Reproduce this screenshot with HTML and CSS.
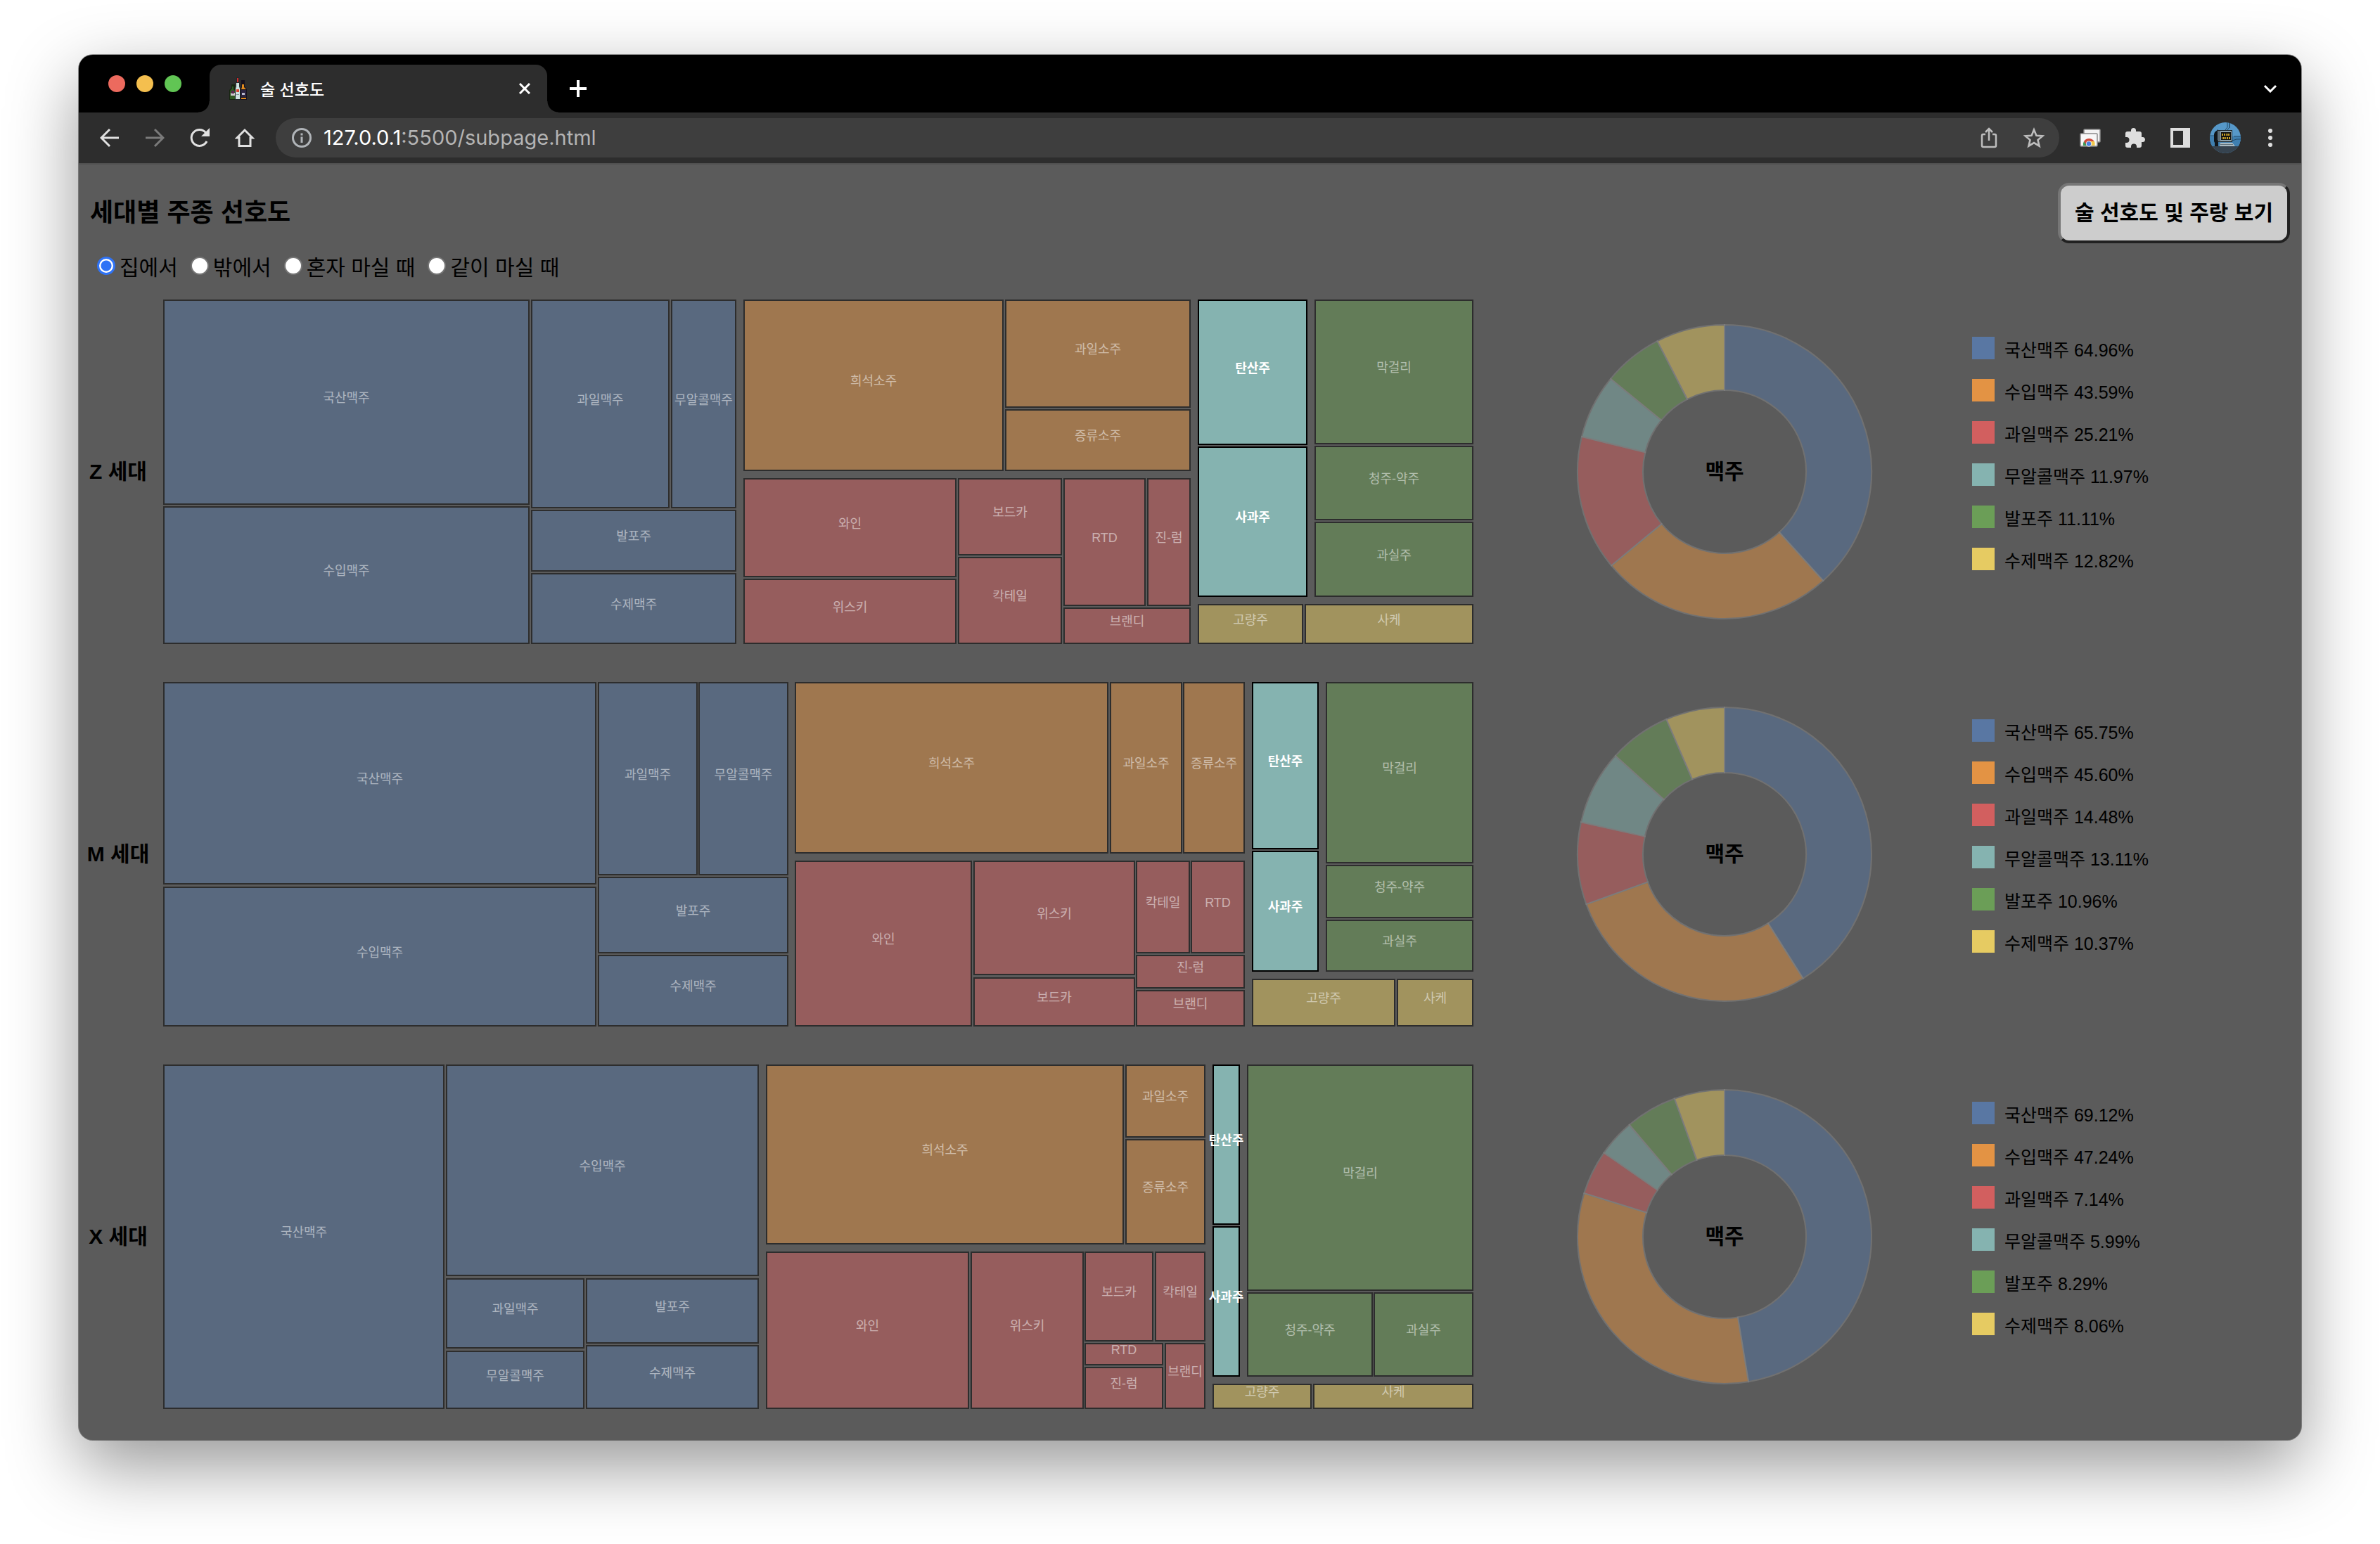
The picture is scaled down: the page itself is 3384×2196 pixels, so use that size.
FILE: index.html
```html
<!DOCTYPE html>
<html lang="ko">
<head>
<meta charset="utf-8">
<title>술 선호도</title>
<link rel="stylesheet" href="styles.css">
</head>
<body>
<div class="window">
  <header class="tabstrip">
    <div class="lights">
      <span class="light light-close"></span>
      <span class="light light-min"></span>
      <span class="light light-max"></span>
    </div>
    <div class="tab">
      <svg class="favicon" viewBox="0 0 26 32" aria-hidden="true">
        <path d="M3 10h5v5l1 3v14H0V18l3-3z" fill="#16240f"/>
        <path d="M4 13h2v4l2 2v12H1V19l3-3z" fill="#2f5a22"/>
        <path d="M2 22h6v4H2z" fill="#c9c9c9"/><path d="M3 19h4v4H3z" fill="#5b2750"/>
        <path d="M17 4h5v9l3 4v15h-9V17l1-4z" fill="#17131f"/>
        <path d="M18 10h3v4l3 3h-7l1-3zM17 29h7v2h-7z" fill="#e08a1e"/>
        <path d="M17 18h7v10h-7z" fill="#2b2440"/><path d="M18 22h4v3h-4z" fill="#b8b8cc"/>
        <path d="M10 0h4v12l2 4v16H8V16l2-4z" fill="#20282a"/>
        <path d="M11 1h2v6h-2z" fill="#cf2b2b"/>
        <path d="M10 8h4v5l1 3v15H9V16l1-3z" fill="#cfe3df"/>
        <path d="M10 17h4v4h-4z" fill="#d8422c"/><path d="M10 24h4v1h-4z" fill="#7d9693"/>
      </svg>
      <span class="tab-title">술 선호도</span>
      <button class="tab-close" aria-label="탭 닫기">
        <svg viewBox="0 0 16 16" width="16" height="16"><path d="M1 1l14 14M15 1L1 15" stroke="#fff" stroke-width="3" fill="none"/></svg>
      </button>
    </div>
    <button class="icon-button new-tab" aria-label="새 탭">
      <svg viewBox="0 0 24 24" width="24" height="24"><path d="M12 0v24M0 12h24" stroke="#fff" stroke-width="4" fill="none"/></svg>
    </button>
    <button class="icon-button tab-search" aria-label="탭 검색">
      <svg viewBox="0 0 20 12" width="20" height="12"><path d="M2 2l8 8 8-8" stroke="#fff" stroke-width="3" fill="none"/></svg>
    </button>
  </header>

  <nav class="toolbar">
    <button class="icon-button" aria-label="뒤로">
      <svg viewBox="0 0 28 28" width="28" height="28"><path d="M27 14H3M14 2L2 14l12 12" stroke="#e0e0e0" stroke-width="3" fill="none"/></svg>
    </button>
    <button class="icon-button" aria-label="앞으로">
      <svg viewBox="0 0 28 28" width="28" height="28"><path d="M1 14h24M14 2l12 12-12 12" stroke="#7a7a7a" stroke-width="3" fill="none"/></svg>
    </button>
    <button class="icon-button" aria-label="새로고침">
      <svg viewBox="0 0 28 28" width="28" height="28"><path d="M24 19a11.500 11.500 0 1 1-1.500-12.500" stroke="#e0e0e0" stroke-width="3" fill="none"/><path d="M28 0v12H16z" fill="#e0e0e0"/></svg>
    </button>
    <button class="icon-button" aria-label="홈">
      <svg viewBox="0 0 28 28" width="28" height="28"><path d="M14 3L3 14h3v11.500h16V14h3z" stroke="#e0e0e0" stroke-width="3" fill="none"/></svg>
    </button>
    <div class="omnibox">
      <svg viewBox="0 0 28 28" width="28" height="28" aria-hidden="true"><circle cx="14" cy="14" r="12.500" stroke="#b0b4b8" stroke-width="3" fill="none"/><path d="M12.500 12.500h3V21h-3zM12.500 7.500h3v3h-3z" fill="#b0b4b8"/></svg>
      <a class="url" href="http://127.0.0.1:5500/subpage.html"><span class="url-host">127.0.0.1</span>:5500/subpage.html</a>
      <button class="icon-button" aria-label="공유">
        <svg viewBox="0 0 24 30" width="24" height="30"><path d="M7 10H4q-2 0-2 2v14q0 2 2 2h16q2 0 2-2V12q0-2-2-2h-3M12 19V3M7 7l5-5 5 5" stroke="#bdbdbd" stroke-width="2.500" fill="none"/></svg>
      </button>
      <button class="icon-button" aria-label="북마크">
        <svg viewBox="0 0 30 30" width="30" height="30"><path d="M15 3.500l3.400 8.200 8.800.7-6.700 5.700 2.100 8.600L15 22.100l-7.600 4.600 2.100-8.600-6.700-5.700 8.800-.7z" stroke="#bdbdbd" stroke-width="2.600" fill="none"/></svg>
      </button>
    </div>
    <button class="icon-button" aria-label="확장 프로그램: 탭">
      <svg viewBox="0 0 30 26" width="30" height="26"><rect x="6" y="1" width="23" height="18" rx="1" fill="#f2f2f2" stroke="#8b8b8b" stroke-width="1.500"/><rect x="1" y="7" width="24" height="18" rx="1" fill="#f7f7f7" stroke="#8b8b8b" stroke-width="1.500"/><path d="M5 24a8.500 8.500 0 0 1 1-6l7 6z" fill="#3f9a57"/><path d="M6 18a8.500 8.500 0 0 1 14.500 0h-7l-5 4z" fill="#cf4a3c"/><path d="M15 18h6q1 3 .5 6H13z" fill="#f2c94c"/><circle cx="13" cy="21.500" r="4" fill="#f7f7f7"/><circle cx="13" cy="21.500" r="3.200" fill="#4a7fe0"/></svg>
    </button>
    <button class="icon-button" aria-label="확장 프로그램">
      <svg viewBox="0 0 30 30" width="30" height="30"><path d="M9 6V4.500a3.500 3.500 0 0 1 7 0V6h5q3 0 3 3v5h1.500a3.500 3.500 0 0 1 0 7H24v5q0 3-3 3h-4v-1.500a4 4 0 0 0-8 0V29H4q-3 0-3-3v-4h1.500a4 4 0 0 0 0-8H1V9q0-3 3-3z" fill="#dedede"/></svg>
    </button>
    <button class="icon-button" aria-label="사이드 패널">
      <svg viewBox="0 0 28 28" width="28" height="28"><path d="M0 0h28v28H0zM4 4v20h14V4z" fill="#dedede" fill-rule="evenodd"/></svg>
    </button>
    <button class="icon-button" aria-label="프로필">
      <svg viewBox="0 0 44 44" width="44" height="44"><clipPath id="avatar"><circle cx="22" cy="22" r="22"/></clipPath><g clip-path="url(#avatar)"><path d="M0 0h44v44H0z" fill="#5698c9"/><path d="M0 20h44v14H0z" fill="#3f7fb0"/><path d="M0 34h44v10H0z" fill="#36434f"/><path d="M22 11l3-4V0M25 11l3-4V0M28 8V0M0 19h6M34 20h10M32 26l6-2h6" stroke="#234a68" stroke-width="1" fill="none"/><path d="M7 14l5-4v24H7v-5l-1-2V17z" fill="#11171c"/><path d="M11 11h21v17H11z" fill="#1b2329"/><path d="M12 12h19v15H12z" fill="#8fa3ad"/><path d="M11 12h4v16l-4-3z" fill="#5c6e79"/><path d="M16 14h14v11H16z" fill="#111"/><path d="M17 16h2v3h-2zM20 16h2v3h-2zM23 16h1v3h-1zM25 16h2v3h-2zM28 16h1v3h-1zM17 21h1v3h-1zM19 21h2v3h-2zM22 21h1v3h-1zM24 21h2v3h-2zM27 21h2v3h-2z" fill="#c9a227"/><path d="M15 29h17l4 5H14z" fill="#a9b9c1"/><path d="M15 31h18v1H15z" fill="#66767f"/></g></svg>
    </button>
    <button class="icon-button" aria-label="메뉴">
      <svg viewBox="0 0 28 28" width="28" height="28" fill="#dedede"><circle cx="14" cy="4" r="3"/><circle cx="14" cy="14" r="3"/><circle cx="14" cy="24" r="3"/></svg>
    </button>
  </nav>

  <main class="page">
    <div class="page-head">
      <h1 class="page-title">세대별 주종 선호도</h1>
      <button class="page-link">술 선호도 및 주랑 보기</button>
    </div>
    <form class="places">
      <label class="place"><input class="radio" type="radio" name="place" checked>집에서</label>
      <label class="place"><input class="radio" type="radio" name="place">밖에서</label>
      <label class="place"><input class="radio" type="radio" name="place">혼자 마실 때</label>
      <label class="place"><input class="radio" type="radio" name="place">같이 마실 때</label>
    </form>
    <div class="rows" id="rows"></div>
  </main>
</div>
<script src="charts.js"></script>
</body>
</html>
```
FILE: charts.js
```js
// Each tile: [name, left, top, right, bottom], in units of the 1864 x 490 treemap.
const generations = [
  {
    name: 'Z 세대',
    beer: [64.96, 43.59, 25.21, 11.97, 11.11, 12.82],
    tiles: {
      beer: [['국산맥주', 0, 0, 521, 292], ['수입맥주', 0, 294, 521, 490], ['과일맥주', 523, 0, 720, 297], ['무알콜맥주', 722, 0, 815, 297], ['발포주', 523, 299, 815, 387], ['수제맥주', 523, 389, 815, 490]],
      soju: [['희석소주', 825, 0, 1195, 244], ['과일소주', 1197, 0, 1461, 154], ['증류소주', 1197, 156, 1461, 244]],
      western: [['와인', 825, 254, 1128, 395], ['위스키', 825, 397, 1128, 490], ['보드카', 1130, 254, 1278, 364], ['칵테일', 1130, 366, 1278, 490], ['RTD', 1280, 254, 1397, 436], ['진-럼', 1399, 254, 1461, 436], ['브랜디', 1280, 438, 1461, 490]],
      korean: [['막걸리', 1637, 0, 1863, 206], ['청주-약주', 1637, 208, 1863, 314], ['과실주', 1637, 316, 1863, 423]],
      asian: [['고량주', 1471, 433, 1621, 490], ['사케', 1623, 433, 1863, 490]],
      other: [['탄산주', 1471, 0, 1627, 207], ['사과주', 1471, 209, 1627, 423]]
    }
  },
  {
    name: 'M 세대',
    beer: [65.75, 45.60, 14.48, 13.11, 10.96, 10.37],
    tiles: {
      beer: [['국산맥주', 0, 0, 616, 288], ['수입맥주', 0, 291, 616, 490], ['과일맥주', 618, 0, 760, 275], ['무알콜맥주', 761, 0, 889, 275], ['발포주', 618, 277, 889, 386], ['수제맥주', 618, 388, 889, 490]],
      soju: [['희석소주', 898, 0, 1344, 244], ['과일소주', 1346, 0, 1449, 244], ['증류소주', 1450, 0, 1538, 244]],
      western: [['와인', 898, 254, 1150, 490], ['위스키', 1152, 254, 1382, 417], ['보드카', 1152, 420, 1382, 490], ['칵테일', 1383, 254, 1460, 386], ['RTD', 1461, 254, 1538, 386], ['진-럼', 1383, 388, 1538, 436], ['브랜디', 1383, 438, 1538, 490]],
      korean: [['막걸리', 1653, 0, 1863, 258], ['청주-약주', 1653, 260, 1863, 336], ['과실주', 1653, 338, 1863, 412]],
      asian: [['고량주', 1548, 422, 1752, 490], ['사케', 1754, 422, 1863, 490]],
      other: [['탄산주', 1548, 0, 1643, 238], ['사과주', 1548, 240, 1643, 412]]
    }
  },
  {
    name: 'X 세대',
    beer: [69.12, 47.24, 7.14, 5.99, 8.29, 8.06],
    tiles: {
      beer: [['국산맥주', 0, 0, 400, 490], ['수입맥주', 402, 0, 847, 301], ['과일맥주', 402, 304, 599, 404], ['무알콜맥주', 402, 407, 599, 490], ['발포주', 601, 304, 847, 397], ['수제맥주', 601, 399, 847, 490]],
      soju: [['희석소주', 857, 0, 1366, 256], ['과일소주', 1368, 0, 1482, 104], ['증류소주', 1368, 106, 1482, 256]],
      western: [['와인', 857, 266, 1146, 490], ['위스키', 1148, 266, 1309, 490], ['보드카', 1310, 266, 1408, 394], ['칵테일', 1410, 266, 1482, 394], ['RTD', 1310, 396, 1422, 428], ['진-럼', 1310, 430, 1422, 490], ['브랜디', 1424, 396, 1482, 490]],
      korean: [['막걸리', 1541, 0, 1863, 322], ['청주-약주', 1541, 324, 1720, 444], ['과실주', 1721, 324, 1863, 444]],
      asian: [['고량주', 1492, 454, 1633, 490], ['사케', 1635, 454, 1863, 490]],
      other: [['탄산주', 1492, 0, 1531, 228], ['사과주', 1492, 230, 1531, 444]]
    }
  }
];

const beers = ['국산맥주', '수입맥주', '과일맥주', '무알콜맥주', '발포주', '수제맥주'];
const hues = ['blue', 'orange', 'red', 'teal', 'green', 'yellow'];
const groupHue = { beer: 'blue', soju: 'orange', western: 'red', other: 'teal', korean: 'green', asian: 'yellow' };

function treemap(tiles) {
  const groups = Object.keys(tiles).map(key => {
    const body = tiles[key].map(([name, x1, y1, x2, y2]) =>
      `<rect x="${x1 + 1}" y="${y1 + 1}" width="${x2 - x1 - 2}" height="${y2 - y1 - 2}"/>` +
      `<text x="${(x1 + x2) / 2}" y="${(y1 + y2) / 2}">${name}</text>`).join('');
    const state = key === 'other' ? 'tiles-on' : 'tiles-off';
    return `<g class="tiles ${state} ${groupHue[key]}">${body}</g>`;
  }).join('');
  return `<svg class="treemap" viewBox="0 0 1864 490" role="img">${groups}</svg>`;
}

function donut(values) {
  const sum = values.reduce((a, b) => a + b, 0);
  const at = (r, t) => `${(212 + r * Math.sin(t)).toFixed(2)} ${(212 - r * Math.cos(t)).toFixed(2)}`;
  let from = 0;
  const slices = values.map((v, i) => {
    const to = from + v / sum * 2 * Math.PI;
    const d = `M${at(209, from)}A209 209 0 0 1 ${at(209, to)}L${at(116, to)}A116 116 0 0 0 ${at(116, from)}Z`;
    from = to;
    return `<path class="slice ${hues[i]}" d="${d}"/>`;
  }).join('');
  return `<svg class="donut" viewBox="0 0 424 424" role="img">${slices}<text class="donut-name" x="212" y="222">맥주</text></svg>`;
}

function legend(values) {
  return '<ul class="legend">' + values.map((v, i) =>
    `<li class="legend-item"><span class="swatch ${hues[i]}"></span>${beers[i]} ${v.toFixed(2)}%</li>`).join('') + '</ul>';
}

document.getElementById('rows').innerHTML = generations.map(g =>
  `<section class="row"><h2 class="row-name">${g.name}</h2>${treemap(g.tiles)}` +
  `<div class="donut-cell">${donut(g.beer)}</div>${legend(g.beer)}</section>`).join('');
```
FILE: styles.css
```css
* {
  box-sizing: border-box;
}

body {
  margin: 0;
  padding: 78px 112px 148px;
  background: #fff;
  color: #000;
  font-family: "Liberation Sans", "Noto Sans CJK KR", sans-serif;
}

button {
  font-family: inherit;
}

.blue { --hue: #5977a3; }
.orange { --hue: #e39344; }
.red { --hue: #d25f5f; }
.teal { --hue: #85b3b0; }
.green { --hue: #6b9e57; }
.yellow { --hue: #e6cb62; }

/* Browser window */
.window {
  overflow: hidden;
  border-radius: 20px;
  background: #5b5b5b;
  box-shadow: 0 0 0 1px rgba(0, 0, 0, .4), 0 36px 100px rgba(0, 0, 0, .42);
}

.tabstrip {
  display: flex;
  align-items: flex-end;
  height: 82px;
  padding: 0 16px 0 42px;
  background: #000;
}

.lights {
  display: flex;
  gap: 16px;
  height: 82px;
  align-items: center;
  margin-right: 40px;
}

.light {
  width: 24px;
  height: 24px;
  border-radius: 50%;
}

.light-close { background: #ec6a5e; }
.light-min { background: #f4bf4f; }
.light-max { background: #61c554; }

.tab {
  position: relative;
  display: flex;
  align-items: center;
  width: 480px;
  height: 68px;
  padding: 0 16px 0 28px;
  border-radius: 16px 16px 0 0;
  background: #2d2d2d;
}

.tab::before,
.tab::after {
  content: "";
  position: absolute;
  bottom: 0;
  width: 16px;
  height: 16px;
}

.tab::before {
  right: 100%;
  background: radial-gradient(circle at 0 0, #000 15px, #2d2d2d 16px);
}

.tab::after {
  left: 100%;
  background: radial-gradient(circle at 100% 0, #000 15px, #2d2d2d 16px);
}

.favicon {
  width: 26px;
  height: 32px;
}

.tab-title {
  flex: 1;
  padding-left: 18px;
  color: #fff;
  font-family: "Noto Sans CJK KR", sans-serif;
  font-size: 23px;
  font-weight: 500;
  line-height: 32px;
}

.tab-close,
.icon-button {
  display: flex;
  align-items: center;
  justify-content: center;
  width: 32px;
  height: 32px;
  padding: 0;
  border: 0;
  background: none;
}

.icon-button {
  flex: none;
  width: 64px;
  height: 68px;
}

.new-tab {
  margin-left: 12px;
}

.tab-search {
  margin-left: auto;
  margin-right: -4px;
}

.toolbar {
  display: flex;
  align-items: center;
  height: 74px;
  padding: 0 12px;
  border-bottom: 2px solid #505050;
  background: #2d2d2d;
}

.omnibox {
  display: flex;
  flex: 1;
  align-items: center;
  height: 56px;
  margin: 0 12px;
  padding: 0 4px 0 23px;
  border-radius: 28px;
  background: #3e3e3e;
}

.url {
  flex: 1;
  padding-left: 17px;
  color: #b4b4b4;
  font-family: Inter, "Liberation Sans", sans-serif;
  font-size: 29px;
  line-height: 36px;
  text-decoration: none;
}

.url-host {
  color: #fff;
}

/* Page header */
.page {
  padding: 26px 0 44px;
}

.page-head {
  display: flex;
  align-items: center;
  justify-content: space-between;
  padding: 0 16px;
}

.page-title {
  margin: 0;
  padding-bottom: 8px;
  font-family: "Noto Sans CJK KR", sans-serif;
  font-size: 36px;
  line-height: 48px;
}

.page-link {
  height: 86px;
  padding: 0 20px 6px;
  border: 4px solid;
  border-color: #767676 #212121 #212121 #767676;
  border-radius: 16px;
  background: #cdcdcd;
  color: #000;
  font-family: "Noto Sans CJK KR", sans-serif;
  font-size: 30px;
  font-weight: 700;
}

.places {
  display: flex;
  gap: 18px;
  margin: 16px 0 32px;
  padding-left: 26px;
}

.place {
  display: flex;
  align-items: center;
  gap: 6px;
  height: 32px;
  font-family: "Noto Sans CJK KR", sans-serif;
  font-size: 30px;
  line-height: 32px;
}

.radio {
  appearance: none;
  width: 26px;
  height: 26px;
  margin: 0;
  border: 2px solid #767676;
  border-radius: 50%;
  background: #fff;
}

.radio:checked {
  border: 3px solid #2f73f6;
  background: radial-gradient(circle, #2f73f6 7px, #fff 8px);
}

/* Charts */
.rows {
  display: flex;
  flex-direction: column;
  gap: 54px;
}

.row {
  display: grid;
  grid-template-columns: 120px 1864fr 708fr 468fr;
  align-items: center;
}

.row-name {
  margin: 0;
  padding-right: 8px;
  font-size: 30px;
  line-height: 40px;
  text-align: center;
}

.treemap {
  display: block;
  width: 100%;
  overflow: visible;
}

.tiles rect {
  fill: var(--hue);
  stroke: #000;
  stroke-width: 2px;
}

.tiles text {
  fill: #fff;
  font-size: 18px;
  text-anchor: middle;
}

.tiles-off rect,
.tiles-off text {
  opacity: .5;
}

.tiles-on text {
  font-weight: 700;
}

.donut-cell {
  display: flex;
  justify-content: center;
  padding-left: 4px;
}

.donut {
  width: 424px;
  max-width: 100%;
}

.slice {
  fill: var(--hue);
  stroke: #888;
  stroke-width: 2px;
  opacity: .5;
}

.donut-name {
  font-size: 30px;
  font-weight: 700;
  text-anchor: middle;
}

.legend {
  display: flex;
  flex-direction: column;
  align-self: start;
  gap: 28px;
  margin: 0;
  padding: 53px 0 0;
  list-style: none;
}

.legend-item {
  display: flex;
  gap: 14px;
  height: 32px;
  font-size: 25px;
  line-height: 38px;
  white-space: pre;
}

.swatch {
  width: 32px;
  height: 32px;
  background: var(--hue);
}
```
